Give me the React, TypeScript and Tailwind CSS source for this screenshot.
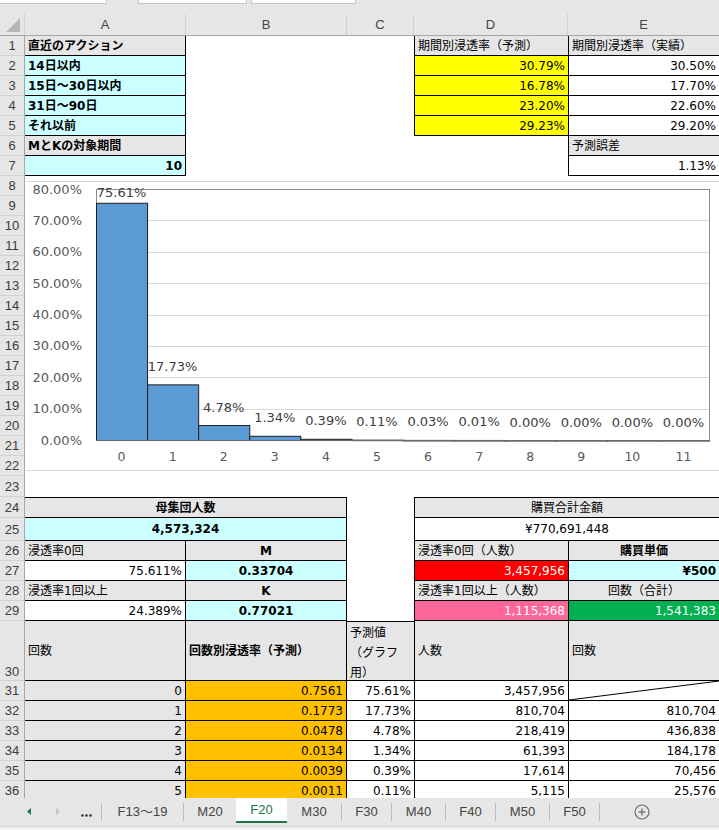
import React from "react";

const WA = "w-[161px]";
const WB = "w-[161px]";
const WC = "w-[67px]";
const WD = "w-[154px]";
const WE = "w-[151px]";
const WAB = "w-[322px]";
const WDE = "w-[305px]";

const GRAY = "bg-[#e7e6e6]";
const CYAN = "bg-[#ccffff]";

function Cell({ w, cls = "", children }: { w: string; cls?: string; children?: React.ReactNode }) {
  return (
    <div className={`${w} shrink-0 flex items-center px-[3px] whitespace-nowrap overflow-hidden border-black ${cls}`}>
      {children}
    </div>
  );
}

function RN({ n, cls = "", end = false }: { n: number; cls?: string; end?: boolean }) {
  return (
    <div
      className={`w-[25px] shrink-0 bg-[#e6e6e6] border-r border-b border-r-[#a6a6a6] border-b-[#d2d2d2] flex justify-center ${
        end ? "items-end pb-[2px]" : "items-center"
      } text-[13px] leading-none text-[#3c3c3c] font-['Liberation_Sans',sans-serif] ${cls}`}
    >
      {n}
    </div>
  );
}

function Row({ n, h, end = false, children }: { n: number; h: string; end?: boolean; children?: React.ReactNode }) {
  return (
    <div className={`flex ${h}`}>
      <RN n={n} end={end} />
      {children}
    </div>
  );
}

const chartVals = [75.61, 17.73, 4.78, 1.34, 0.39, 0.11, 0.03, 0.01, 0, 0, 0, 0];

function Chart() {
  const x0 = 71;
  const x1 = 684;
  const yTop = 13;
  const yBase = 264;
  const k = (yBase - yTop) / 80;
  const cw = (x1 - x0) / 12;
  const grid = [10, 20, 30, 40, 50, 60, 70];
  const ticks = [0, 10, 20, 30, 40, 50, 60, 70, 80];
  return (
    <svg width={694} height={300} className="block">
      <line x1={1} y1={5.5} x2={694} y2={5.5} stroke="#d9d9d9" />
      <line x1={1} y1={294.5} x2={694} y2={294.5} stroke="#d9d9d9" />
      {grid.map((g) => (
        <line key={g} x1={x0} x2={x1} y1={Math.round(yBase - g * k) + 0.5} y2={Math.round(yBase - g * k) + 0.5} stroke="#d9d9d9" />
      ))}
      <rect x={x0 + 0.5} y={yTop + 0.5} width={x1 - x0} height={yBase - yTop} fill="none" stroke="#8c8c8c" />
      {ticks.map((t) => (
        <text
          key={t}
          x={57}
          y={yBase - t * k + 4.5}
          textAnchor="end"
          fontSize={13}
          fill="#595959"
          fontFamily="DejaVu Sans, sans-serif"
        >
          {t.toFixed(2)}%
        </text>
      ))}
      {chartVals.map((v, i) => {
        const top = yBase - v * k;
        const cx = x0 + (i + 0.5) * cw;
        const base = Math.max(top - 13.5, 21);
        return (
          <g key={i}>
            <rect
              x={x0 + i * cw + 0.5}
              y={top + 0.5}
              width={cw}
              height={Math.max(yBase - top, 0.5)}
              fill="#5b9bd5"
              stroke="#1f1f1f"
              strokeWidth={1}
            />
            <text x={cx} y={base} textAnchor="middle" fontSize={13} fill="#404040" fontFamily="DejaVu Sans, sans-serif">
              {v.toFixed(2)}%
            </text>
            <text x={cx} y={284.5} textAnchor="middle" fontSize={12.5} fill="#595959" fontFamily="DejaVu Sans, sans-serif">
              {i}
            </text>
          </g>
        );
      })}
      <line x1={x0} x2={x1 + 1} y1={yBase + 0.5} y2={yBase + 0.5} stroke="#6b6b6b" />
    </svg>
  );
}

const topRows = [
  ["14日以内", "30.79%", "30.50%"],
  ["15日～30日以内", "16.78%", "17.70%"],
  ["31日～90日", "23.20%", "22.60%"],
  ["それ以前", "29.23%", "29.20%"],
];

const bottomRows: [number, string, string, string, string | null][] = [
  [0, "0.7561", "75.61%", "3,457,956", null],
  [1, "0.1773", "17.73%", "810,704", "810,704"],
  [2, "0.0478", "4.78%", "218,419", "436,838"],
  [3, "0.0134", "1.34%", "61,393", "184,178"],
  [4, "0.0039", "0.39%", "17,614", "70,456"],
  [5, "0.0011", "0.11%", "5,115", "25,576"],
];

function Sep() {
  return <div className="w-[1px] shrink-0 self-center h-[18px] bg-[#bdbdbd]" />;
}

function Tab({ w, label }: { w: string; label: string }) {
  return <div className={`${w} shrink-0 flex items-center justify-center text-[13px] text-[#444]`}>{label}</div>;
}

export default function App() {
  return (
    <div className="w-[719px] h-[830px] overflow-hidden bg-white text-[12px] text-black font-['DejaVu_Sans','Noto_Sans_CJK_JP',sans-serif]">
      {/* top strip */}
      <div className="h-[14px] bg-[#e6e6e6] flex items-start">
        <div className="w-[107px] h-[4px] bg-white border-b border-r border-[#c6c6c6]" />
        <div className="w-[31px]" />
        <div className="w-[109px] h-[4px] bg-white border-b border-x border-[#c6c6c6]" />
        <div className="w-[4px]" />
        <div className="w-[105px] h-[4px] bg-white border-b border-x border-[#c6c6c6]" />
      </div>
      {/* column headers */}
      <div className="flex h-[22px] bg-[#e6e6e6] border-b border-[#a6a6a6] text-[13px] text-[#444] font-['Liberation_Sans',sans-serif]">
        <div className="w-[25px] shrink-0 border-r border-[#cfcfcf] flex items-end justify-end pr-[3px] pb-[2px]">
          <svg width="16" height="16">
            <polygon points="15,1 15,15 1,15" fill="#b6b6b6" />
          </svg>
        </div>
        <div className={`${WA} shrink-0 border-r border-[#cfcfcf] flex items-center justify-center`}>A</div>
        <div className={`${WB} shrink-0 border-r border-[#cfcfcf] flex items-center justify-center`}>B</div>
        <div className={`${WC} shrink-0 border-r border-[#cfcfcf] flex items-center justify-center`}>C</div>
        <div className={`${WD} shrink-0 border-r border-[#cfcfcf] flex items-center justify-center`}>D</div>
        <div className={`${WE} shrink-0 flex items-center justify-center`}>E</div>
      </div>

      {/* sheet body */}
      <div className="h-[762px] overflow-hidden">
        <Row n={1} h="h-[20px]">
          <Cell w={WA} cls={`${GRAY} font-bold border-r border-b`}>直近のアクション</Cell>
          <Cell w={WB} />
          <Cell w={WC} />
          <Cell w={WD} cls={`${GRAY} border-l border-b`}>期間別浸透率（予測）</Cell>
          <Cell w={WE} cls={`${GRAY} border-l border-b`}>期間別浸透率（実績）</Cell>
        </Row>
        {topRows.map((r, i) => (
          <Row key={i} n={i + 2} h="h-[20px]">
            <Cell w={WA} cls={`${CYAN} font-bold border-r border-b`}>{r[0]}</Cell>
            <Cell w={WB} />
            <Cell w={WC} />
            <Cell w={WD} cls="bg-[#ffff00] border-l border-b justify-end">{r[1]}</Cell>
            <Cell w={WE} cls="bg-white border-l border-b justify-end">{r[2]}</Cell>
          </Row>
        ))}
        <Row n={6} h="h-[20px]">
          <Cell w={WA} cls={`${GRAY} font-bold border-r border-b`}>MとKの対象期間</Cell>
          <Cell w={WB} />
          <Cell w={WC} />
          <Cell w={WD} />
          <Cell w={WE} cls={`${GRAY} border-l border-b`}>予測誤差</Cell>
        </Row>
        <Row n={7} h="h-[20px]">
          <Cell w={WA} cls={`${CYAN} font-bold border-r border-b justify-end`}>10</Cell>
          <Cell w={WB} />
          <Cell w={WC} />
          <Cell w={WD} />
          <Cell w={WE} cls="bg-white border-l border-b justify-end">1.13%</Cell>
        </Row>

        {/* chart rows 8-22 */}
        <div className="flex h-[300px]">
          <div className="w-[25px] shrink-0 flex flex-col">
            {Array.from({ length: 15 }, (_, i) => (
              <RN key={i} n={i + 8} cls="h-[20px]" />
            ))}
          </div>
          <div className="w-[694px] shrink-0 bg-white">
            <Chart />
          </div>
        </div>

        <Row n={23} h="h-[21px]" />
        <Row n={24} h="h-[21px]">
          <Cell w={WAB} cls={`${GRAY} font-bold border-t border-r border-b justify-center`}>母集団人数</Cell>
          <Cell w={WC} />
          <Cell w={WDE} cls={`${GRAY} border-t border-l border-b justify-center`}>購買合計金額</Cell>
        </Row>
        <Row n={25} h="h-[23px]">
          <Cell w={WAB} cls={`${CYAN} font-bold border-r border-b justify-center`}>4,573,324</Cell>
          <Cell w={WC} />
          <Cell w={WDE} cls="bg-white border-l border-b justify-center">¥770,691,448</Cell>
        </Row>
        <Row n={26} h="h-[20px]">
          <Cell w={WA} cls={`${GRAY} border-r border-b`}>浸透率0回</Cell>
          <Cell w={WB} cls={`${GRAY} font-bold border-r border-b justify-center`}>M</Cell>
          <Cell w={WC} />
          <Cell w={WD} cls={`${GRAY} border-l border-b`}>浸透率0回（人数）</Cell>
          <Cell w={WE} cls={`${GRAY} font-bold border-l border-b justify-center`}>購買単価</Cell>
        </Row>
        <Row n={27} h="h-[20px]">
          <Cell w={WA} cls="bg-white border-r border-b justify-end">75.611%</Cell>
          <Cell w={WB} cls={`${CYAN} font-bold border-r border-b justify-center`}>0.33704</Cell>
          <Cell w={WC} />
          <Cell w={WD} cls="bg-[#ff0000] text-white border-l border-b justify-end">3,457,956</Cell>
          <Cell w={WE} cls={`${CYAN} font-bold border-l border-b justify-end`}>¥500</Cell>
        </Row>
        <Row n={28} h="h-[20px]">
          <Cell w={WA} cls={`${GRAY} border-r border-b`}>浸透率1回以上</Cell>
          <Cell w={WB} cls={`${GRAY} font-bold border-r border-b justify-center`}>K</Cell>
          <Cell w={WC} />
          <Cell w={WD} cls={`${GRAY} border-l border-b`}>浸透率1回以上（人数）</Cell>
          <Cell w={WE} cls={`${GRAY} border-l border-b justify-center`}>回数（合計）</Cell>
        </Row>
        <Row n={29} h="h-[20px]">
          <Cell w={WA} cls="bg-white border-r border-b justify-end">24.389%</Cell>
          <Cell w={WB} cls={`${CYAN} font-bold border-r border-b justify-center`}>0.77021</Cell>
          <Cell w={WC} />
          <Cell w={WD} cls="bg-[#ff6699] text-white border-l border-b justify-end">1,115,368</Cell>
          <Cell w={WE} cls="bg-[#00b050] text-white border-l border-b justify-end">1,541,383</Cell>
        </Row>
        <Row n={30} h="h-[60px]" end>
          <Cell w={WA} cls={`${GRAY} border-r border-b`}>回数</Cell>
          <Cell w={WB} cls={`${GRAY} font-bold border-r border-b`}>回数別浸透率（予測）</Cell>
          <div className={`${WC} shrink-0 ${GRAY} border-t border-b border-black px-[3px] pt-[1px] leading-[20px] whitespace-nowrap overflow-hidden`}>
            予測値
            <br />
            （グラフ
            <br />
            用）
          </div>
          <Cell w={WD} cls={`${GRAY} border-l border-b`}>人数</Cell>
          <Cell w={WE} cls={`${GRAY} border-l border-b`}>回数</Cell>
        </Row>
        {bottomRows.map((r) => (
          <Row key={r[0]} n={31 + r[0]} h="h-[20px]">
            <Cell w={WA} cls={`${GRAY} border-r border-b justify-end`}>{r[0]}</Cell>
            <Cell w={WB} cls="bg-[#ffc000] border-r border-b justify-end">{r[1]}</Cell>
            <Cell w={WC} cls="bg-white border-b justify-end">{r[2]}</Cell>
            <Cell w={WD} cls="bg-white border-l border-b justify-end">{r[3]}</Cell>
            {r[4] === null ? (
              <div className={`${WE} shrink-0 relative bg-white border-l border-b border-black`}>
                <svg className="absolute inset-0" width="150" height="19">
                  <line x1="0" y1="19" x2="150" y2="0" stroke="#000" strokeWidth="1" />
                </svg>
              </div>
            ) : (
              <Cell w={WE} cls="bg-white border-l border-b justify-end">{r[4]}</Cell>
            )}
          </Row>
        ))}
      </div>

      {/* sheet tabs */}
      <div className="flex h-[28px] bg-[#e6e6e6] font-['Liberation_Sans','Noto_Sans_CJK_JP',sans-serif]">
        <div className="w-[101px] shrink-0 flex items-center">
          <svg width="101" height="28" className="block">
            <polygon points="31,10 31,17 27,13.5" fill="#217346" />
            <polygon points="56,10 56,17 60,13.5" fill="#c3c3c3" />
            <circle cx="82.5" cy="17.5" r="1.3" fill="#333" />
            <circle cx="86.5" cy="17.5" r="1.3" fill="#333" />
            <circle cx="90.5" cy="17.5" r="1.3" fill="#333" />
          </svg>
        </div>
        <Sep />
        <Tab w="w-[81px]" label="F13～19" />
        <Sep />
        <Tab w="w-[52px]" label="M20" />
        <div className="w-[51px] shrink-0 h-[25px] bg-white border-b-2 border-[#217346] flex items-center justify-center text-[13px] text-[#217346] pt-[1px]">
          F20
        </div>
        <Tab w="w-[54px]" label="M30" />
        <Sep />
        <Tab w="w-[49px]" label="F30" />
        <Sep />
        <Tab w="w-[53px]" label="M40" />
        <Sep />
        <Tab w="w-[49px]" label="F40" />
        <Sep />
        <Tab w="w-[53px]" label="M50" />
        <Sep />
        <Tab w="w-[49px]" label="F50" />
        <Sep />
        <div className="flex-1 flex items-center pl-[34px]">
          <svg width="16" height="16">
            <circle cx="8" cy="8" r="7" fill="none" stroke="#6b6b6b" strokeWidth="1.2" />
            <line x1="8" y1="4.5" x2="8" y2="11.5" stroke="#6b6b6b" strokeWidth="1.3" />
            <line x1="4.5" y1="8" x2="11.5" y2="8" stroke="#6b6b6b" strokeWidth="1.3" />
          </svg>
        </div>
      </div>
      <div className="h-[4px] bg-[#f3f3f3] border-t border-[#d4d4d4]" />
    </div>
  );
}
